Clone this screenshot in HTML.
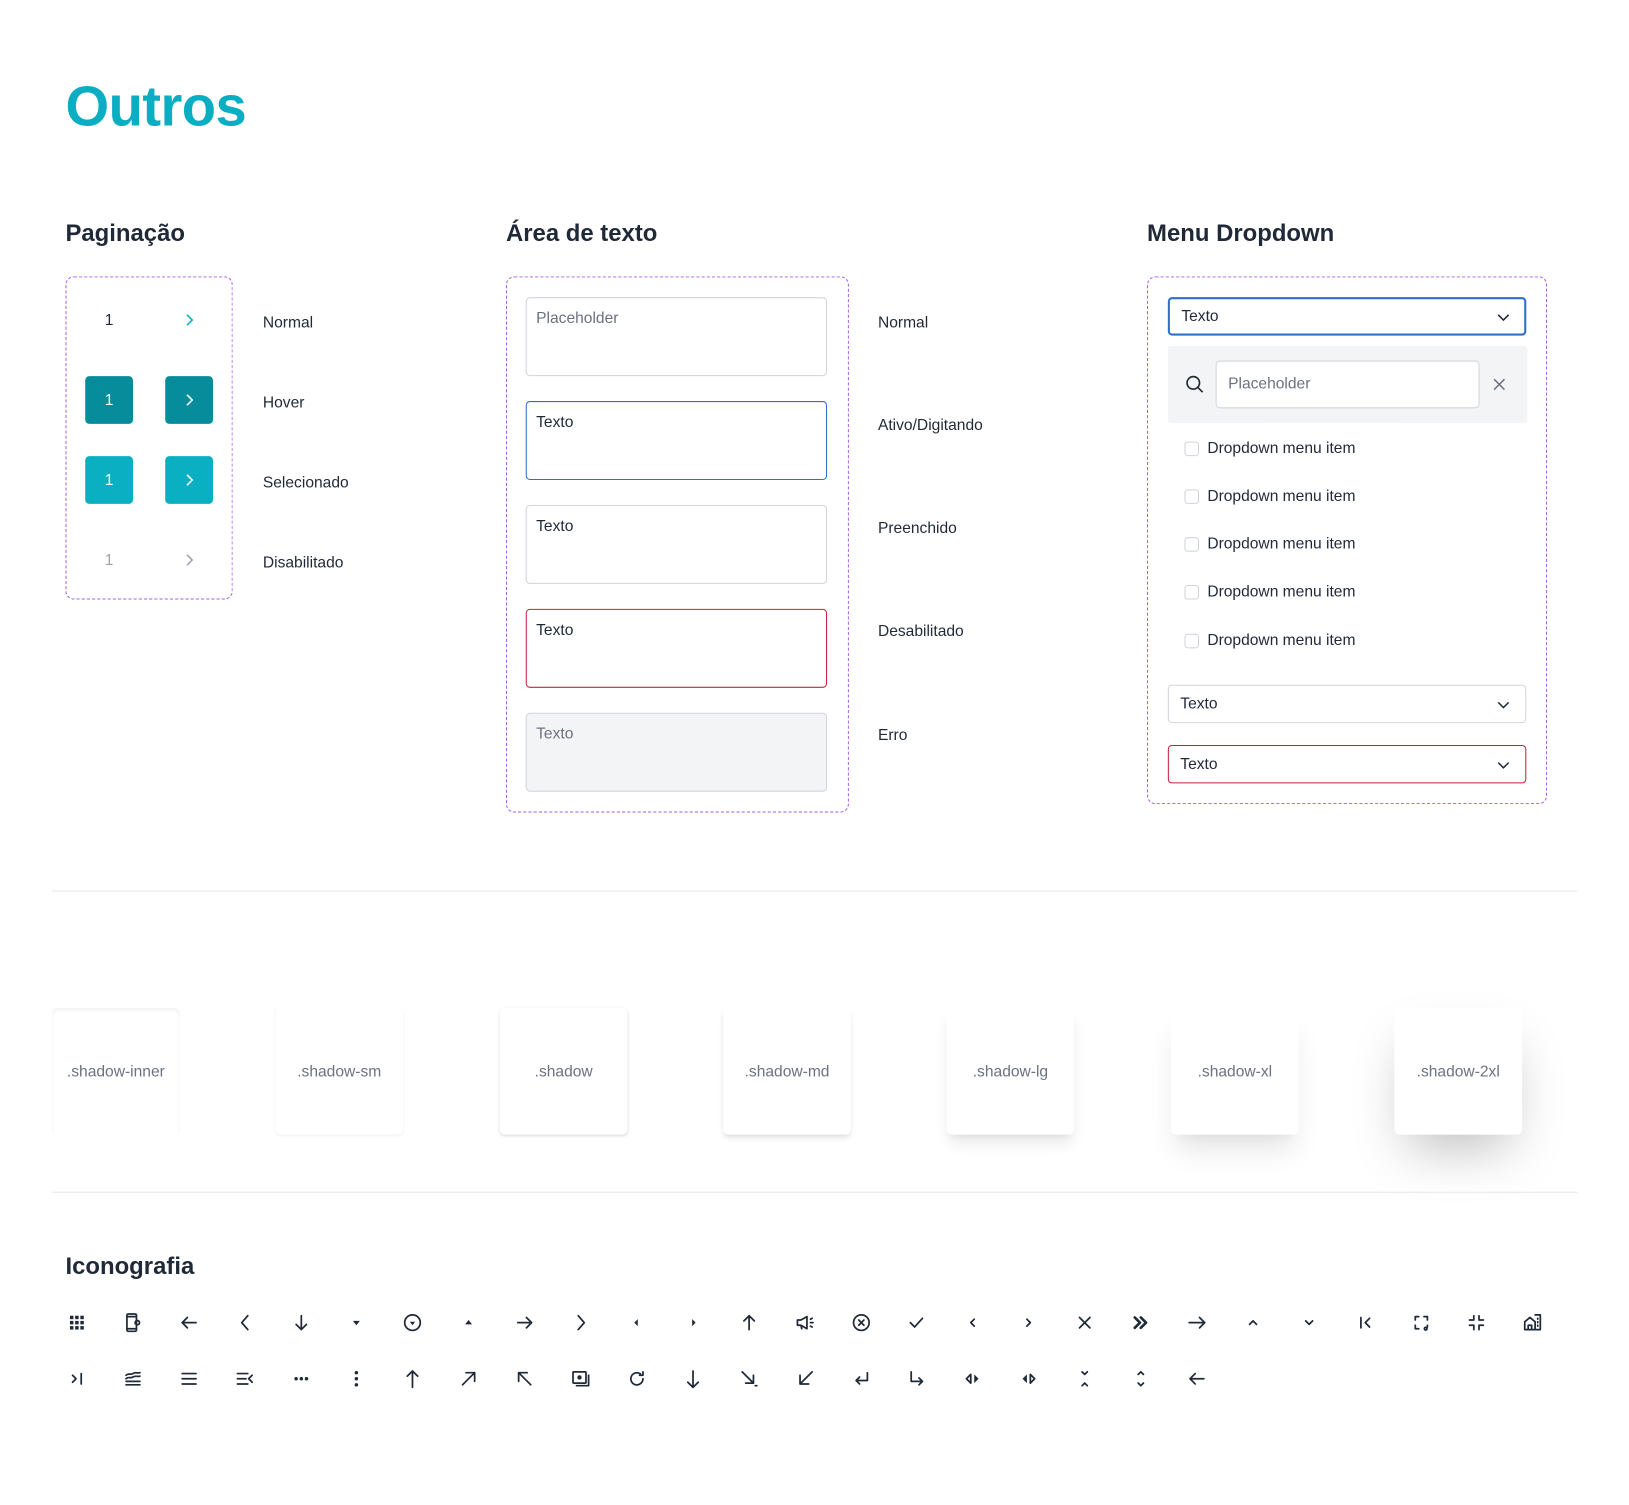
<!DOCTYPE html>
<html><head><meta charset="utf-8">
<style>
*{box-sizing:border-box;margin:0;padding:0}
html,body{width:1629px;height:1505px;overflow:hidden;background:#fff}
body{font-family:"Liberation Sans",sans-serif;color:#1f2937}
#w{position:absolute;left:0;top:0;width:1565px;height:1446px;transform:scale(1.039);transform-origin:0 0}
.a{position:absolute}
h1{position:absolute;left:63px;top:72px;font-size:54px;font-weight:bold;color:#0aaec2;letter-spacing:-0.5px}
h2{position:absolute;font-size:23px;font-weight:bold;color:#1f2937;line-height:28px}
.dash{position:absolute;border:1.5px dashed #a160e0;border-radius:8px}
.lbl{position:absolute;font-size:15px;color:#1f2937;line-height:18px}
.pg{position:absolute;width:46px;height:46px;border-radius:4px;display:flex;align-items:center;justify-content:center;font-size:15px}
.ta{position:absolute;left:506px;width:290px;height:76px;border:1px solid #d1d5db;border-radius:4px;padding:11px 9px;font-size:15px}
.sel{position:absolute;left:1124px;width:345px;height:37px;border:1px solid #d1d5db;border-radius:4px;padding:0 11px;font-size:15px;line-height:35px}
.sel svg{position:absolute;right:14px;top:11px}
.it{position:absolute;left:1140px;font-size:15px;line-height:18px}
.it i{position:absolute;left:0;top:2px;width:14px;height:14px;border:1.5px solid #d1d5db;border-radius:3px}
.it span{margin-left:22px}
.card{position:absolute;top:970px;width:123px;height:122px;border-radius:5px;background:#fff;display:flex;align-items:center;justify-content:center;font-size:15px;color:#6b7280}
.hr{position:absolute;left:50px;width:1468px;height:1px;background:#e5e7eb}
.ic{position:absolute;width:20px;height:20px}
.ic path,.ic circle,.ic rect,.ic line,.ic polyline{fill:none;stroke:#1f2937;stroke-width:2;stroke-linecap:round;stroke-linejoin:round}
.ic .f{fill:#1f2937;stroke:none}
</style></head><body><div id="w">
<h1>Outros</h1>
<h2 style="left:63px;top:210px">Paginação</h2>
<h2 style="left:487px;top:210px">Área de texto</h2>
<h2 style="left:1104px;top:210px">Menu Dropdown</h2>

<div class="dash" style="left:63px;top:266px;width:161px;height:311px"></div>
<div class="pg" style="left:82px;top:285px">1</div>
<div class="pg" style="left:159px;top:285px"><svg width="14" height="14" viewBox="0 0 14 14"><path d="M5 2l5 5-5 5" fill="none" stroke="#0aaec2" stroke-width="1.5"/></svg></div>
<div class="pg" style="left:82px;top:362px;background:#078c9b;color:#fff">1</div>
<div class="pg" style="left:159px;top:362px;background:#078c9b"><svg width="14" height="14" viewBox="0 0 14 14"><path d="M5 2l5 5-5 5" fill="none" stroke="#fff" stroke-width="1.5"/></svg></div>
<div class="pg" style="left:82px;top:439px;background:#0ab0c2;color:#fff">1</div>
<div class="pg" style="left:159px;top:439px;background:#0ab0c2"><svg width="14" height="14" viewBox="0 0 14 14"><path d="M5 2l5 5-5 5" fill="none" stroke="#fff" stroke-width="1.5"/></svg></div>
<div class="pg" style="left:82px;top:516px;color:#9ca3af">1</div>
<div class="pg" style="left:159px;top:516px"><svg width="14" height="14" viewBox="0 0 14 14"><path d="M5 2l5 5-5 5" fill="none" stroke="#9ca3af" stroke-width="1.5"/></svg></div>
<div class="lbl" style="left:253px;top:302px">Normal</div>
<div class="lbl" style="left:253px;top:379px">Hover</div>
<div class="lbl" style="left:253px;top:456px">Selecionado</div>
<div class="lbl" style="left:253px;top:533px">Disabilitado</div>

<div class="dash" style="left:487px;top:266px;width:330px;height:516px"></div>
<div class="ta" style="top:286px;color:#6b7280">Placeholder</div>
<div class="ta" style="top:386px;border:1.5px solid #2f6fc9">Texto</div>
<div class="ta" style="top:486px">Texto</div>
<div class="ta" style="top:586px;border:1.5px solid #c8203f">Texto</div>
<div class="ta" style="top:686px;background:#f3f4f6;color:#6b7280">Texto</div>
<div class="lbl" style="left:845px;top:302px">Normal</div>
<div class="lbl" style="left:845px;top:401px">Ativo/Digitando</div>
<div class="lbl" style="left:845px;top:500px">Preenchido</div>
<div class="lbl" style="left:845px;top:599px">Desabilitado</div>
<div class="lbl" style="left:845px;top:699px">Erro</div>

<div class="dash" style="left:1104px;top:266px;width:385px;height:508px"></div>
<div class="sel" style="top:286px;border:2px solid #2f6fc9;line-height:33px">Texto<svg width="14" height="14" viewBox="0 0 14 14" style="top:10px;right:13px"><path d="M2 5l5 5 5-5" fill="none" stroke="#1f2937" stroke-width="1.5"/></svg></div>
<div class="a" style="left:1124px;top:333px;width:346px;height:74px;background:#f3f4f6;border-radius:3px"></div>
<svg class="a" style="left:1140px;top:360px" width="20" height="20" viewBox="0 0 20 20"><circle cx="8.5" cy="8.5" r="6" fill="none" stroke="#1f2937" stroke-width="1.6"/><path d="M13 13l4.5 4.5" stroke="#1f2937" stroke-width="1.6"/></svg>
<div class="a" style="left:1170px;top:347px;width:254px;height:46px;background:#fff;border:1px solid #d1d5db;border-radius:4px;padding:0 11px;line-height:44px;font-size:15px;color:#6b7280">Placeholder</div>
<svg class="a" style="left:1436px;top:363px" width="14" height="14" viewBox="0 0 14 14"><path d="M2 2l10 10M12 2L2 12" stroke="#6b7280" stroke-width="1.5"/></svg>
<div class="it" style="top:423px"><i></i><span>Dropdown menu item</span></div>
<div class="it" style="top:469px"><i></i><span>Dropdown menu item</span></div>
<div class="it" style="top:515px"><i></i><span>Dropdown menu item</span></div>
<div class="it" style="top:561px"><i></i><span>Dropdown menu item</span></div>
<div class="it" style="top:608px"><i></i><span>Dropdown menu item</span></div>
<div class="sel" style="top:659px">Texto<svg width="14" height="14" viewBox="0 0 14 14"><path d="M2 5l5 5 5-5" fill="none" stroke="#1f2937" stroke-width="1.5"/></svg></div>
<div class="sel" style="top:717px;border-color:#c8203f">Texto<svg width="14" height="14" viewBox="0 0 14 14"><path d="M2 5l5 5 5-5" fill="none" stroke="#1f2937" stroke-width="1.5"/></svg></div>

<div class="hr" style="top:857px"></div>
<div class="card" style="left:50px;box-shadow:inset 0 2px 4px rgba(0,0,0,0.06)">.shadow-inner</div>
<div class="card" style="left:265px;box-shadow:0 1px 2px rgba(0,0,0,0.05)">.shadow-sm</div>
<div class="card" style="left:481px;box-shadow:0 1px 3px rgba(0,0,0,0.1),0 1px 2px rgba(0,0,0,0.06)">.shadow</div>
<div class="card" style="left:696px;box-shadow:0 4px 6px -1px rgba(0,0,0,0.1),0 2px 4px -1px rgba(0,0,0,0.06)">.shadow-md</div>
<div class="card" style="left:911px;box-shadow:0 10px 15px -3px rgba(0,0,0,0.1),0 4px 6px -2px rgba(0,0,0,0.05)">.shadow-lg</div>
<div class="card" style="left:1127px;box-shadow:0 20px 25px -5px rgba(0,0,0,0.1),0 10px 10px -5px rgba(0,0,0,0.04)">.shadow-xl</div>
<div class="card" style="left:1342px;box-shadow:0 25px 50px -12px rgba(0,0,0,0.25)">.shadow-2xl</div>
<div class="hr" style="top:1147px"></div>

<h2 style="left:63px;top:1204px">Iconografia</h2>

<!-- row 1 -->
<svg class="ic" style="left:64px;top:1263px" viewBox="0 0 24 24"><rect class="f" x="4" y="4" width="4" height="4"/><rect class="f" x="10" y="4" width="4" height="4"/><rect class="f" x="16" y="4" width="4" height="4"/><rect class="f" x="4" y="10" width="4" height="4"/><rect class="f" x="10" y="10" width="4" height="4"/><rect class="f" x="16" y="10" width="4" height="4"/><rect class="f" x="4" y="16" width="4" height="4"/><rect class="f" x="10" y="16" width="4" height="4"/><rect class="f" x="16" y="16" width="4" height="4"/></svg>
<svg class="ic" style="left:118px;top:1263px" viewBox="0 0 24 24"><rect x="5" y="2" width="11" height="20" rx="1.5"/><path d="M5 5h11M5 19h11"/><circle cx="17" cy="12" r="2.5"/></svg>
<svg class="ic" style="left:172px;top:1263px" viewBox="0 0 24 24"><path d="M20 12H4M10 6l-6 6 6 6"/></svg>
<svg class="ic" style="left:226px;top:1263px" viewBox="0 0 24 24"><path d="M15 4l-7 8 7 8"/></svg>
<svg class="ic" style="left:280px;top:1263px" viewBox="0 0 24 24"><path d="M12 4v16M6 14l6 6 6-6"/></svg>
<svg class="ic" style="left:333px;top:1263px" viewBox="0 0 24 24"><path class="f" d="M8 10h8l-4 5z"/></svg>
<svg class="ic" style="left:387px;top:1263px" viewBox="0 0 24 24"><circle cx="12" cy="12" r="9"/><path class="f" d="M9 11h6l-3 4z"/></svg>
<svg class="ic" style="left:441px;top:1263px" viewBox="0 0 24 24"><path class="f" d="M8 14h8l-4-5z"/></svg>
<svg class="ic" style="left:495px;top:1263px" viewBox="0 0 24 24"><path d="M4 12h16M14 6l6 6-6 6"/></svg>
<svg class="ic" style="left:549px;top:1263px" viewBox="0 0 24 24"><path d="M9 4l7 8-7 8"/></svg>
<svg class="ic" style="left:603px;top:1263px" viewBox="0 0 24 24"><path class="f" d="M13 8v8l-4-4z"/></svg>
<svg class="ic" style="left:657px;top:1263px" viewBox="0 0 24 24"><path class="f" d="M11 8v8l4-4z"/></svg>
<svg class="ic" style="left:711px;top:1263px" viewBox="0 0 24 24"><path d="M12 20V4M6 10l6-6 6 6"/></svg>
<svg class="ic" style="left:765px;top:1263px" viewBox="0 0 24 24"><path d="M3 9h4l7-4v14l-7-4H3zM7 15l1 4M18 8l2-1M18 12h3M18 16l2 1"/></svg>
<svg class="ic" style="left:819px;top:1263px" viewBox="0 0 24 24"><circle cx="12" cy="12" r="9"/><path d="M9 9l6 6M15 9l-6 6"/></svg>
<svg class="ic" style="left:872px;top:1263px" viewBox="0 0 24 24"><path d="M5 12l5 5 9-10"/></svg>
<svg class="ic" style="left:926px;top:1263px" viewBox="0 0 24 24"><path d="M14 8l-4 4 4 4"/></svg>
<svg class="ic" style="left:980px;top:1263px" viewBox="0 0 24 24"><path d="M10 8l4 4-4 4"/></svg>
<svg class="ic" style="left:1034px;top:1263px" viewBox="0 0 24 24"><path d="M6 6l12 12M18 6L6 18"/></svg>
<svg class="ic" style="left:1088px;top:1263px" viewBox="0 0 24 24"><path d="M5 6l6 6-6 6M12 6l6 6-6 6" style="stroke-width:3"/></svg>
<svg class="ic" style="left:1142px;top:1263px" viewBox="0 0 24 24"><path d="M3 12h18M15 6l6 6-6 6"/></svg>
<svg class="ic" style="left:1196px;top:1263px" viewBox="0 0 24 24"><path d="M8 14l4-4 4 4"/></svg>
<svg class="ic" style="left:1250px;top:1263px" viewBox="0 0 24 24"><path d="M8 10l4 4 4-4"/></svg>
<svg class="ic" style="left:1304px;top:1263px" viewBox="0 0 24 24"><path d="M7 6v12M17 7l-5 5 5 5"/></svg>
<svg class="ic" style="left:1358px;top:1263px" viewBox="0 0 24 24"><path d="M5 9V5h4M15 5h4v4M5 15v4h4M19 15v2"/><circle cx="17" cy="19" r="1.5"/></svg>
<svg class="ic" style="left:1411px;top:1263px" viewBox="0 0 24 24"><path d="M9 4v5H4M15 4v5h5M9 20v-5H4M15 20v-5h5"/></svg>
<svg class="ic" style="left:1465px;top:1263px" viewBox="0 0 24 24"><path d="M3 20V11l6-5 6 5v9zM7 20v-5h4v5M15 3h6v17h-6M18 7v1M18 11v1M18 15v1"/></svg>

<!-- row 2 -->
<svg class="ic" style="left:64px;top:1317px" viewBox="0 0 24 24"><path d="M7 8l4 4-4 4M17 6v12"/></svg>
<svg class="ic" style="left:118px;top:1317px" viewBox="0 0 24 24"><path d="M4 8c3-3 5 0 8-2s5 0 8-1M4 12c3-3 5 0 8-2s5 0 8-1M4 15h16M4 19h16"/></svg>
<svg class="ic" style="left:172px;top:1317px" viewBox="0 0 24 24"><path d="M4 6h16M4 12h16M4 18h16"/></svg>
<svg class="ic" style="left:226px;top:1317px" viewBox="0 0 24 24"><path d="M3 6h12M3 12h10M3 18h12M20 8l-4 4 4 4"/></svg>
<svg class="ic" style="left:280px;top:1317px" viewBox="0 0 24 24"><circle class="f" cx="6" cy="12" r="2"/><circle class="f" cx="12" cy="12" r="2"/><circle class="f" cx="18" cy="12" r="2"/></svg>
<svg class="ic" style="left:333px;top:1317px" viewBox="0 0 24 24"><circle class="f" cx="12" cy="5" r="2"/><circle class="f" cx="12" cy="12" r="2"/><circle class="f" cx="12" cy="19" r="2"/></svg>
<svg class="ic" style="left:387px;top:1317px" viewBox="0 0 24 24"><path d="M12 22V3M6 9l6-6 6 6"/></svg>
<svg class="ic" style="left:441px;top:1317px" viewBox="0 0 24 24"><path d="M5 19L19 5M9 5h10v10"/></svg>
<svg class="ic" style="left:495px;top:1317px" viewBox="0 0 24 24"><path d="M19 19L5 5M5 15V5h10"/></svg>
<svg class="ic" style="left:549px;top:1317px" viewBox="0 0 24 24"><rect x="3" y="4" width="15" height="13" rx="1"/><path d="M21 8v12H7"/><circle class="f" cx="10.5" cy="10.5" r="2.5"/></svg>
<svg class="ic" style="left:603px;top:1317px" viewBox="0 0 24 24"><path d="M19 12a7 7 0 1 1-3-5.7M19 4v4h-4"/></svg>
<svg class="ic" style="left:657px;top:1317px" viewBox="0 0 24 24"><path d="M12 3v19M6 16l6 6 6-6"/></svg>
<svg class="ic" style="left:711px;top:1317px" viewBox="0 0 24 24"><path d="M4 4l13 13M17 8v9H8M19 20h2"/></svg>
<svg class="ic" style="left:765px;top:1317px" viewBox="0 0 24 24"><path d="M20 4L6 18M6 8v10h10"/></svg>
<svg class="ic" style="left:819px;top:1317px" viewBox="0 0 24 24"><path d="M19 5v9H6M10 10l-4 4 4 4"/></svg>
<svg class="ic" style="left:872px;top:1317px" viewBox="0 0 24 24"><path d="M6 4v11h13M15 11l4 4-4 4"/></svg>
<svg class="ic" style="left:926px;top:1317px" viewBox="0 0 24 24"><path d="M10 7l-5 5 5 5z"/><path class="f" d="M14 7l5 5-5 5z"/></svg>
<svg class="ic" style="left:980px;top:1317px" viewBox="0 0 24 24"><path class="f" d="M10 7l-5 5 5 5z"/><path d="M14 7l5 5-5 5z"/></svg>
<svg class="ic" style="left:1034px;top:1317px" viewBox="0 0 24 24"><path d="M9 4l3 3 3-3M9 20l3-3 3 3"/></svg>
<svg class="ic" style="left:1088px;top:1317px" viewBox="0 0 24 24"><path d="M9 7l3-3 3 3M9 17l3 3 3-3"/></svg>
<svg class="ic" style="left:1142px;top:1317px" viewBox="0 0 24 24"><path d="M20 12H4M10 6l-6 6 6 6"/></svg>
</div></body></html>
